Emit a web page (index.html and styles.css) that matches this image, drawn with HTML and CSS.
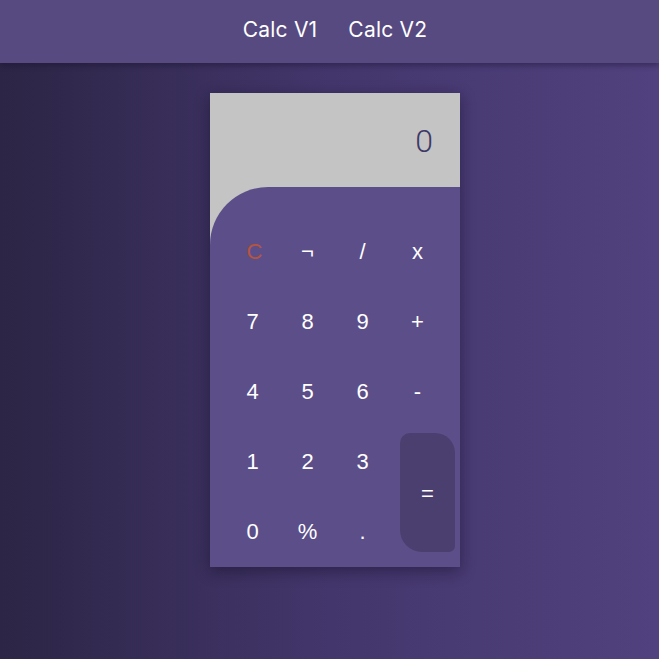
FILE: index.html
```html
<!DOCTYPE html>
<html>
<head>
<meta charset="utf-8">
<link rel="stylesheet" href="styles.css">
</head>
<body>
<nav class="nav">
  <a class="nav-link">Calc V1</a>
  <a class="nav-link">Calc V2</a>
</nav>
<main class="main">
  <div class="calc">
    <div class="display">0</div>
    <div class="keypad">
      <div class="key clear">C</div>
      <div class="key">¬</div>
      <div class="key">/</div>
      <div class="key">x</div>
      <div class="key">7</div>
      <div class="key">8</div>
      <div class="key">9</div>
      <div class="key">+</div>
      <div class="key">4</div>
      <div class="key">5</div>
      <div class="key">6</div>
      <div class="key">-</div>
      <div class="key">1</div>
      <div class="key">2</div>
      <div class="key">3</div>
      <div class="key equal">=</div>
      <div class="key">0</div>
      <div class="key">%</div>
      <div class="key">.</div>
    </div>
  </div>
</main>
</body>
</html>
```

FILE: styles.css
```css
* { box-sizing: border-box; }
html, body { margin: 0; padding: 0; }
body {
  width: 659px;
  height: 659px;
  overflow: hidden;
  background: linear-gradient(to right, #2c2545 0%, #43366c 50%, #51417e 100%);
  font-family: "Liberation Sans", Arial, sans-serif;
}
.nav {
  height: 63px;
  background: #574a80;
  display: flex;
  justify-content: center;
  align-items: center;
  gap: 31px;
  box-shadow: 0 2px 6px rgba(20, 14, 40, 0.45);
  position: relative;
  padding-left: 11px;
}
.nav-link {
  color: #ffffff;
  font-family: Inter, "Noto Sans", sans-serif;
  font-size: 21px;
  font-weight: 400;
  letter-spacing: 0.2px;
  padding-bottom: 4px;
}
.main {
  display: flex;
  justify-content: center;
  padding-top: 30px;
  padding-left: 11px;
}
.calc {
  width: 250px;
  height: 474px;
  background: #c4c4c4;
  display: flex;
  flex-direction: column;
  box-shadow: 0 4px 14px rgba(15, 10, 30, 0.45);
}
.display {
  height: 94px;
  display: flex;
  justify-content: flex-end;
  align-items: center;
  padding-right: 27px;
  padding-top: 2px;
  font-family: Roboto, "Liberation Sans", sans-serif;
  font-weight: 300;
  font-size: 32px;
  color: #3d3968;
}
.keypad {
  flex: 1;
  background: #5c4f89;
  border-top-left-radius: 58px;
  display: grid;
  grid-template-columns: 55px 55px 55px 65px;
  grid-template-rows: repeat(5, 70px);
  padding: 30px 0 0 15px;
}
.key {
  width: 55px;
  display: flex;
  justify-content: center;
  align-items: center;
  color: #ffffff;
  font-family: "Liberation Sans", Arial, sans-serif;
  font-size: 22px;
  justify-self: start;
}
.clear {
  color: #b5553f;
  padding-left: 4px;
}
.equal {
  grid-column: 4;
  grid-row: 4 / span 2;
  justify-self: end;
  margin: 6px 0 15px 0;
  background: #4b3f6f;
  border-radius: 10px 20px 6px 22px;
  padding-top: 2px;
}
```
